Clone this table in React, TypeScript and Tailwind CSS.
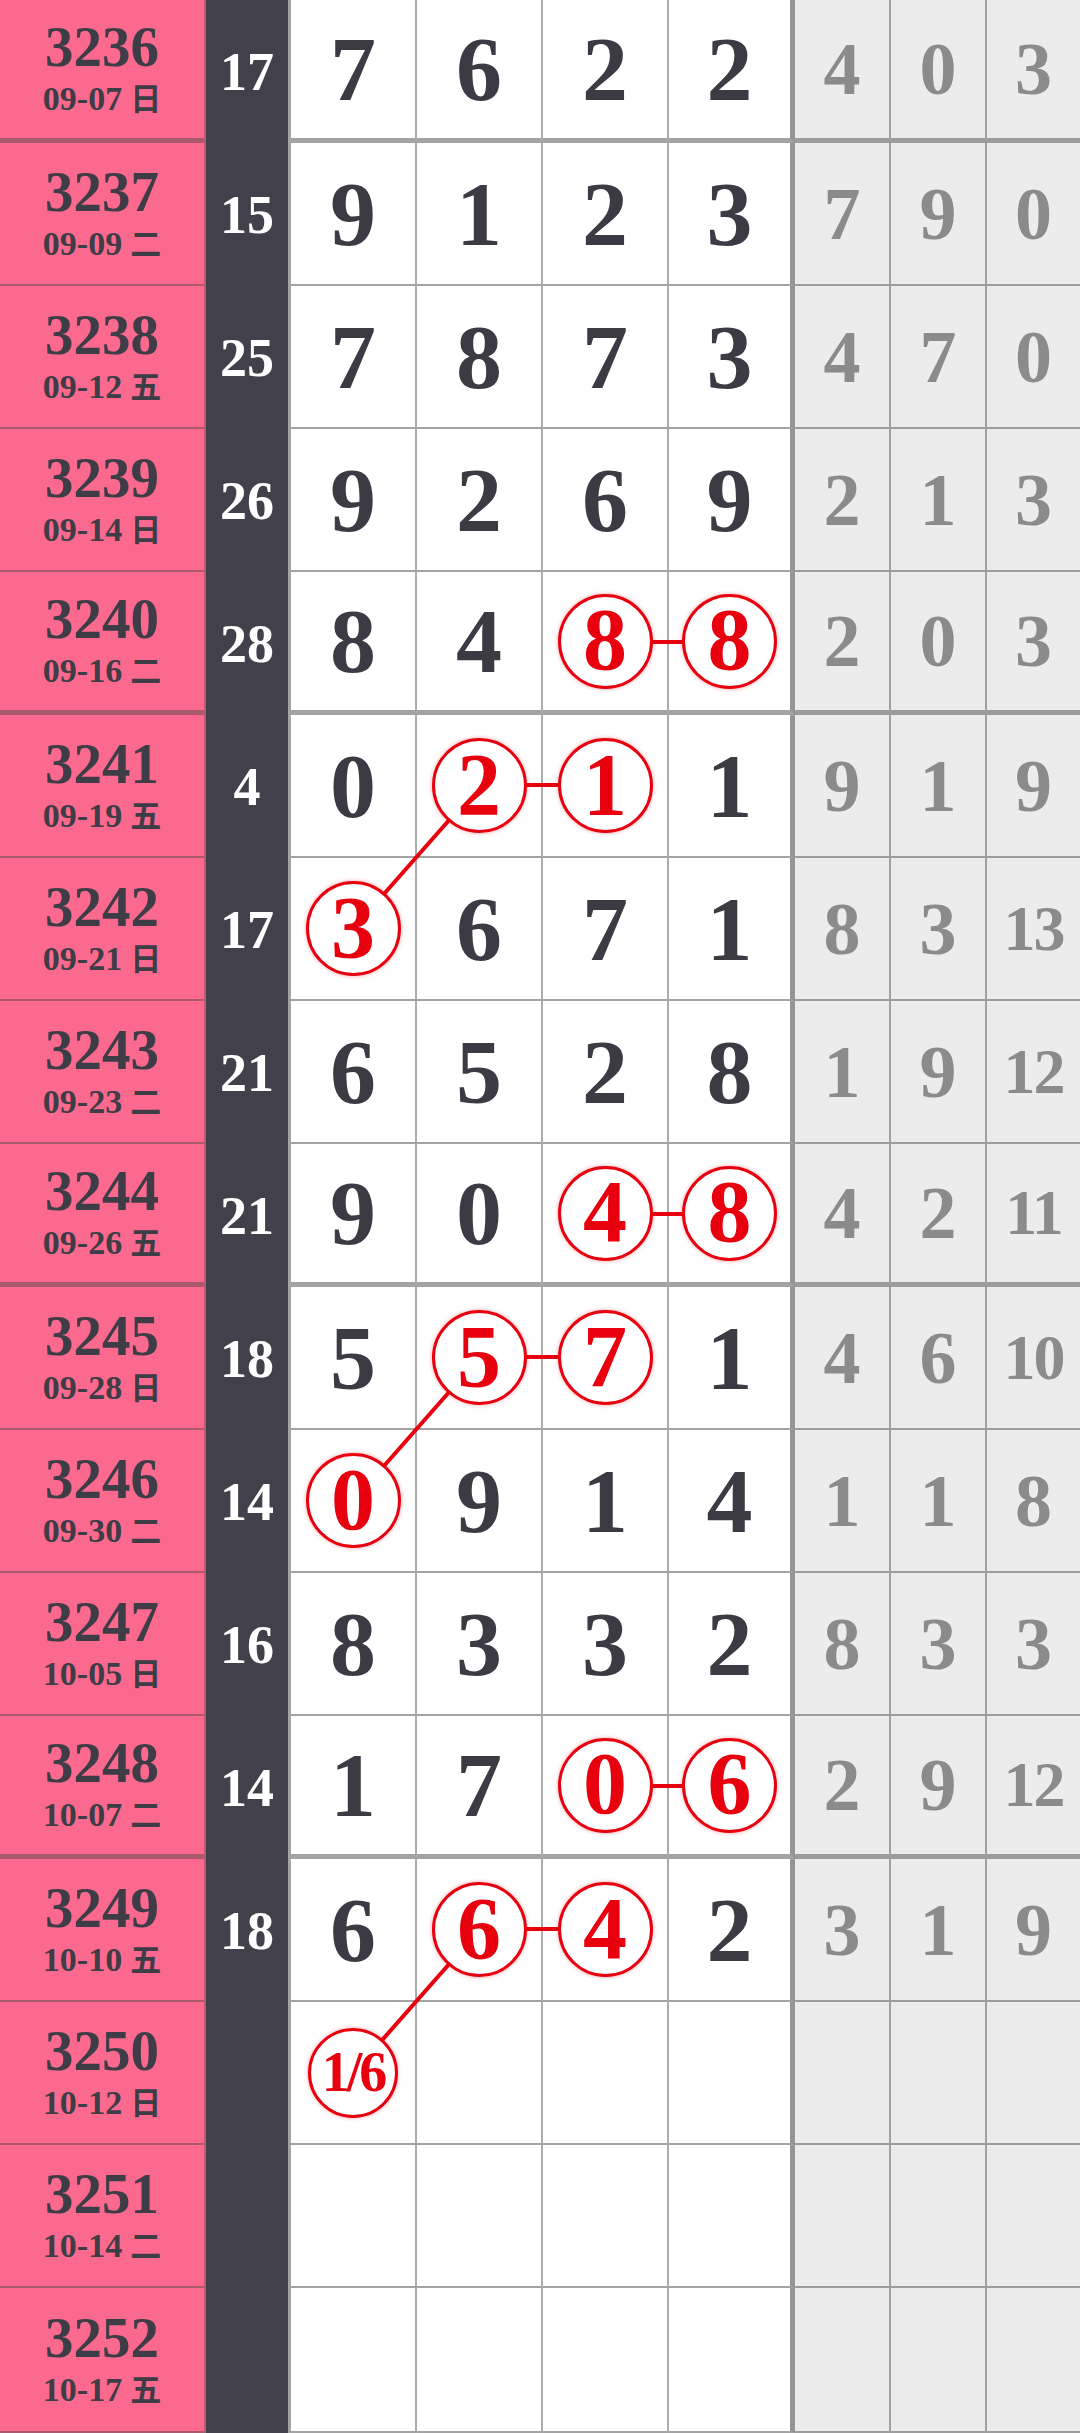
import React from "react";

type Row = {
  no: string;
  date: string;
  wd: string;
  sum?: string;
  d: string[];
  g: string[];
  hit?: number[];
};

const rows: Row[] = [
  { no: "3236", date: "09-07", wd: "日", sum: "17", d: ["7", "6", "2", "2"], g: ["4", "0", "3"] },
  { no: "3237", date: "09-09", wd: "二", sum: "15", d: ["9", "1", "2", "3"], g: ["7", "9", "0"] },
  { no: "3238", date: "09-12", wd: "五", sum: "25", d: ["7", "8", "7", "3"], g: ["4", "7", "0"] },
  { no: "3239", date: "09-14", wd: "日", sum: "26", d: ["9", "2", "6", "9"], g: ["2", "1", "3"] },
  { no: "3240", date: "09-16", wd: "二", sum: "28", d: ["8", "4", "8", "8"], g: ["2", "0", "3"], hit: [2, 3] },
  { no: "3241", date: "09-19", wd: "五", sum: "4", d: ["0", "2", "1", "1"], g: ["9", "1", "9"], hit: [1, 2] },
  { no: "3242", date: "09-21", wd: "日", sum: "17", d: ["3", "6", "7", "1"], g: ["8", "3", "13"], hit: [0] },
  { no: "3243", date: "09-23", wd: "二", sum: "21", d: ["6", "5", "2", "8"], g: ["1", "9", "12"] },
  { no: "3244", date: "09-26", wd: "五", sum: "21", d: ["9", "0", "4", "8"], g: ["4", "2", "11"], hit: [2, 3] },
  { no: "3245", date: "09-28", wd: "日", sum: "18", d: ["5", "5", "7", "1"], g: ["4", "6", "10"], hit: [1, 2] },
  { no: "3246", date: "09-30", wd: "二", sum: "14", d: ["0", "9", "1", "4"], g: ["1", "1", "8"], hit: [0] },
  { no: "3247", date: "10-05", wd: "日", sum: "16", d: ["8", "3", "3", "2"], g: ["8", "3", "3"] },
  { no: "3248", date: "10-07", wd: "二", sum: "14", d: ["1", "7", "0", "6"], g: ["2", "9", "12"], hit: [2, 3] },
  { no: "3249", date: "10-10", wd: "五", sum: "18", d: ["6", "6", "4", "2"], g: ["3", "1", "9"], hit: [1, 2] },
  { no: "3250", date: "10-12", wd: "日", d: ["1/6", "", "", ""], g: ["", "", ""], hit: [0] },
  { no: "3251", date: "10-14", wd: "二", d: ["", "", "", ""], g: ["", "", ""] },
  { no: "3252", date: "10-17", wd: "五", d: ["", "", "", ""], g: ["", "", ""] },
];

const ROW_H = 143;
const colX = [354, 480, 606, 732];
const cy = (i: number) => i * ROW_H + 70;

// connector lines: [row, col] -> [row, col]
const links: [number, number, number, number][] = [
  [4, 2, 4, 3],
  [5, 1, 5, 2],
  [5, 1, 6, 0],
  [8, 2, 8, 3],
  [9, 1, 9, 2],
  [9, 1, 10, 0],
  [12, 2, 12, 3],
  [13, 1, 13, 2],
  [13, 1, 14, 0],
];

const serif = "font-['Liberation_Serif','Noto_Sans_CJK_SC',serif] font-bold";

function Circle({ v }: { v: string }) {
  const small = v.length > 1;
  return (
    <div
      className={`relative z-20 flex items-center justify-center rounded-full border-[3px] border-[#e8000f] bg-white text-[#e8000f] leading-none shadow-[0_0_4px_rgba(232,0,15,0.35)] ${
        small ? "h-[90px] w-[90px] text-[56px] tracking-[-3px]" : "h-[95px] w-[95px] text-[88px]"
      }`}
    >
      <span className="-mt-[2px]">{v}</span>
    </div>
  );
}

export default function App() {
  return (
    <div className={`relative w-[1080px] bg-white ${serif}`}>
      {rows.map((r, i) => {
        const thick = Number(r.no) % 4 === 0 && i !== rows.length - 1;
        const bb = thick ? "border-b-[5px]" : "border-b-2";
        return (
          <div
            key={r.no}
            className={`grid grid-cols-[206px_85px_126px_126px_126px_126px_96px_96px_93px] ${
              i === rows.length - 1 ? "h-[145px]" : "h-[143px]"
            }`}
          >
            <div
              className={`flex flex-col items-center justify-center border-r-2 border-r-[#c95774] bg-[#fb6a8e] pb-[4px] text-[#3e3c46] ${bb} border-b-[#a95a6c]`}
            >
              <div className="text-[57px] leading-none">{r.no}</div>
              <div className="mt-[6px] text-[34px] leading-none">
                {r.date}
                <span className="ml-[8px] font-['Noto_Sans_CJK_SC',sans-serif] text-[31px] font-bold">{r.wd}</span>
              </div>
            </div>
            <div className="flex items-center justify-center border-r-[3px] border-r-[#a4a4a8] bg-[#42414b] text-[54px] leading-none text-white">
              {r.sum}
            </div>
            {r.d.map((v, j) => (
              <div
                key={j}
                className={`flex items-center justify-center bg-white text-[92px] leading-none text-[#3c3b44] ${bb} border-b-[#a3a3a3] ${
                  j === 3 ? "border-r-[5px] border-r-[#959595]" : "border-r-2 border-r-[#acacac]"
                }`}
              >
                {v && (r.hit?.includes(j) ? <Circle v={v} /> : <span>{v}</span>)}
              </div>
            ))}
            {r.g.map((v, j) => (
              <div
                key={j}
                className={`flex items-center justify-center bg-[#ececec] leading-none text-[#8b8b8b] ${bb} border-b-[#9c9c9c] ${
                  j < 2 ? "border-r-2 border-r-[#a1a1a1]" : ""
                } ${v.length > 1 ? "text-[64px] tracking-[-2px]" : "text-[74px]"}`}
              >
                {v}
              </div>
            ))}
          </div>
        );
      })}
      <svg className="pointer-events-none absolute left-0 top-0 z-10 h-full w-full">
        {links.map(([r1, c1, r2, c2], k) => (
          <line
            key={k}
            x1={colX[c1]}
            y1={cy(r1)}
            x2={colX[c2]}
            y2={cy(r2)}
            stroke="#e8000f"
            strokeWidth={4}
          />
        ))}
      </svg>
    </div>
  );
}
